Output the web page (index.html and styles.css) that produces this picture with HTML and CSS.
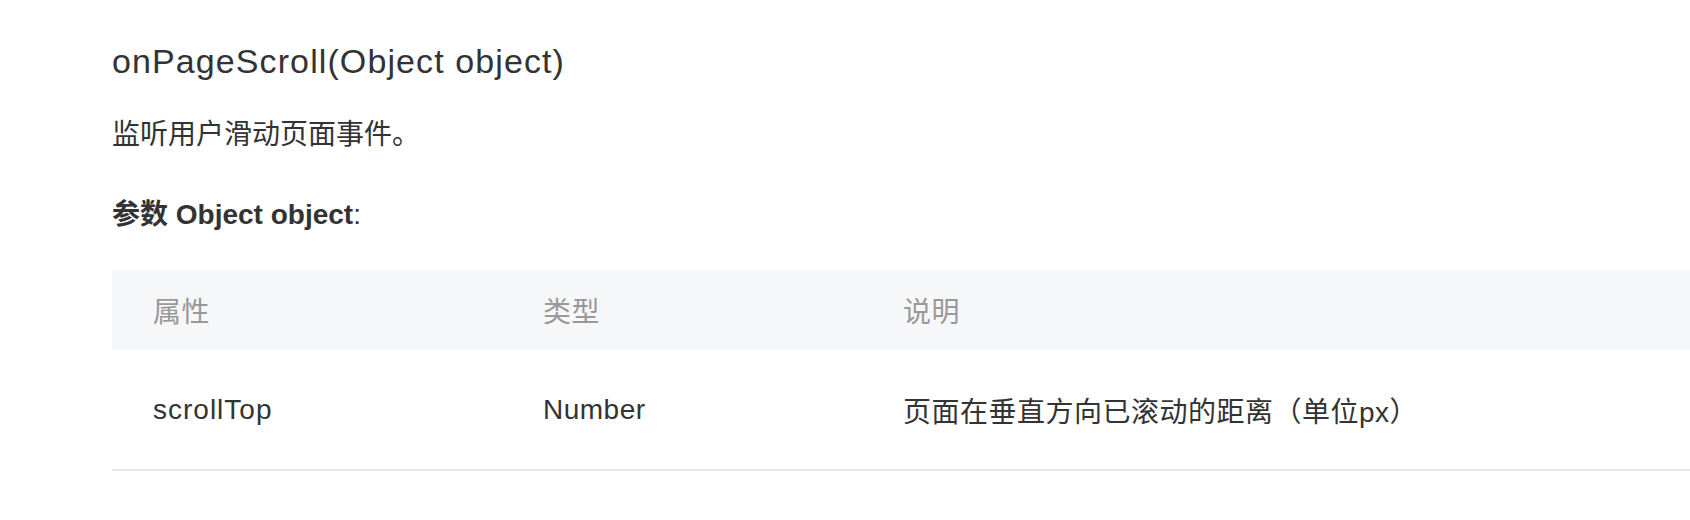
FILE: index.html
```html
<!DOCTYPE html>
<html lang="zh-CN">
<head>
<meta charset="utf-8">
<title>onPageScroll</title>
<link rel="stylesheet" href="styles.css">
</head>
<body>
<main class="doc">
  <h2 class="api-title">onPageScroll(Object object)</h2>
  <p class="desc">监听用户滑动页面事件。</p>
  <p class="param-label"><strong>参数 Object object</strong>:</p>
  <table class="param-table">
    <thead>
      <tr>
        <th class="col-name">属性</th>
        <th class="col-type">类型</th>
        <th class="col-desc">说明</th>
      </tr>
    </thead>
    <tbody>
      <tr>
        <td class="col-name prop-name">scrollTop</td>
        <td class="col-type">Number</td>
        <td class="col-desc">页面在垂直方向已滚动的距离（单位px）</td>
      </tr>
    </tbody>
  </table>
</main>
</body>
</html>
```

FILE: styles.css
```css
html, body {
  margin: 0;
  padding: 0;
  background: #ffffff;
}

body {
  font-family: "Liberation Sans", "Noto Sans CJK SC", sans-serif;
  color: #333333;
  overflow: hidden;
}

.doc {
  padding: 37px 0 0 112px;
}

.api-title {
  margin: 0;
  font-size: 34px;
  line-height: 48px;
  font-weight: 400;
  letter-spacing: 1.1px;
  color: #333333;
}

.desc {
  margin: 29px 0 0;
  font-size: 28px;
  line-height: 42px;
}

.param-label {
  margin: 38px 0 0;
  font-size: 28px;
  line-height: 42px;
}

.param-label strong {
  font-weight: 700;
}

.param-table {
  margin-top: 34px;
  width: 100%;
  border-collapse: collapse;
  font-size: 28px;
  letter-spacing: 0.5px;
}

.param-table th,
.param-table td {
  text-align: left;
  padding: 0 0 0 41px;
  vertical-align: middle;
}

.param-table thead tr {
  background: #f6f7f9;
}

.param-table th {
  height: 80px;
  font-weight: 400;
  color: #999999;
}

.param-table td {
  height: 119px;
  border-bottom: 2px solid #e5e5e5;
  color: #333333;
}

.param-table .prop-name {
  letter-spacing: 1px;
}

.col-name {
  width: 349px;
}

.col-type {
  width: 319px;
}
```
